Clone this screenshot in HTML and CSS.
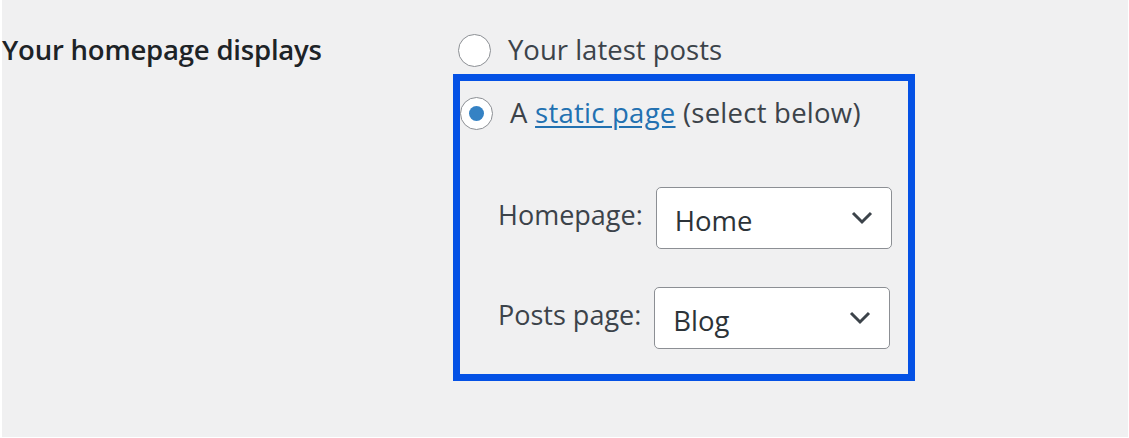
FILE: index.html
```html
<!DOCTYPE html>
<html lang="en">
<head>
<meta charset="utf-8">
<title>Reading settings</title>
<link rel="stylesheet" href="styles.css">
</head>
<body>
<div class="frame">
  <div class="row">
    <div class="th">Your homepage displays</div>
    <div class="td">
      <label class="option first">
        <span class="radio"></span>
        <span class="opt-text">Your latest posts</span>
      </label>
      <div class="highlight">
        <label class="option static">
          <span class="radio checked"></span>
          <span class="opt-text">A <a href="#" class="link">static page</a> (select below)</span>
        </label>
        <div class="pages">
          <div class="page-row">
            <span class="page-label">Homepage:</span>
            <div class="select home"><span>Home</span>
              <svg class="chev" width="22" height="14" viewBox="0 0 22 14"><polyline points="2,2 11,11 20,2" fill="none" stroke="#3c434a" stroke-width="3"/></svg>
            </div>
          </div>
          <div class="page-row">
            <span class="page-label">Posts page:</span>
            <div class="select"><span>Blog</span>
              <svg class="chev" width="22" height="14" viewBox="0 0 22 14"><polyline points="2,2 11,11 20,2" fill="none" stroke="#3c434a" stroke-width="3"/></svg>
            </div>
          </div>
        </div>
      </div>
    </div>
  </div>
</div>
</body>
</html>
```
FILE: styles.css
```css
html, body { margin: 0; padding: 0; background: #ffffff; }
body { font-family: "Open Sans", "Noto Sans", sans-serif; color: #3c434a; }
.frame {
  margin: 0 1px 0 2px;
  height: 437px;
  background: #f0f0f1;
  box-sizing: border-box;
  padding-top: 32px;
}
.row { display: flex; }
.th {
  width: 451px;
  font-size: 27.5px;
  font-weight: 600;
  color: #1d2327;
  line-height: 36px;
  letter-spacing: -0.2px;
}
.td { display: flex; flex-direction: column; }
.option {
  display: flex;
  align-items: center;
  gap: 17px;
  font-size: 27.5px;
  line-height: 36px;
}
.option.first { margin-left: 5px; height: 36px; }
.option.static .opt-text { letter-spacing: 0.25px; }
.radio {
  width: 31px; height: 31px;
  border: 1px solid #8c8f94;
  border-radius: 50%;
  background: #fff;
  display: flex; align-items: center; justify-content: center;
  flex: none;
}
.radio.checked::after {
  content: "";
  width: 15px; height: 15px;
  border-radius: 50%;
  background: #3582c4;
}
.link { color: #2271b1; text-decoration: underline; text-underline-offset: 3px; }
.highlight {
  margin-top: 6px;
  width: 462px; height: 307px;
  box-sizing: border-box;
  border: 7px solid #0451e5;
  padding-top: 14px;
}
.highlight .option { margin-left: 0; }
.pages { padding: 56px 0 0 38px; display: flex; flex-direction: column; gap: 38px; }
.page-row { display: flex; align-items: center; gap: 13px; font-size: 27px; }
.page-label { margin-top: -7px; }
.select {
  width: 236px; height: 62px; box-sizing: border-box;
  border: 1px solid #8c8f94;
  border-radius: 5px;
  background: #fff;
  display: flex; align-items: center; justify-content: space-between;
  padding: 4px 18px 0 18px;
  font-size: 27.5px;
  color: #2c3338;
}
.chev { margin-top: -4px; }
```
